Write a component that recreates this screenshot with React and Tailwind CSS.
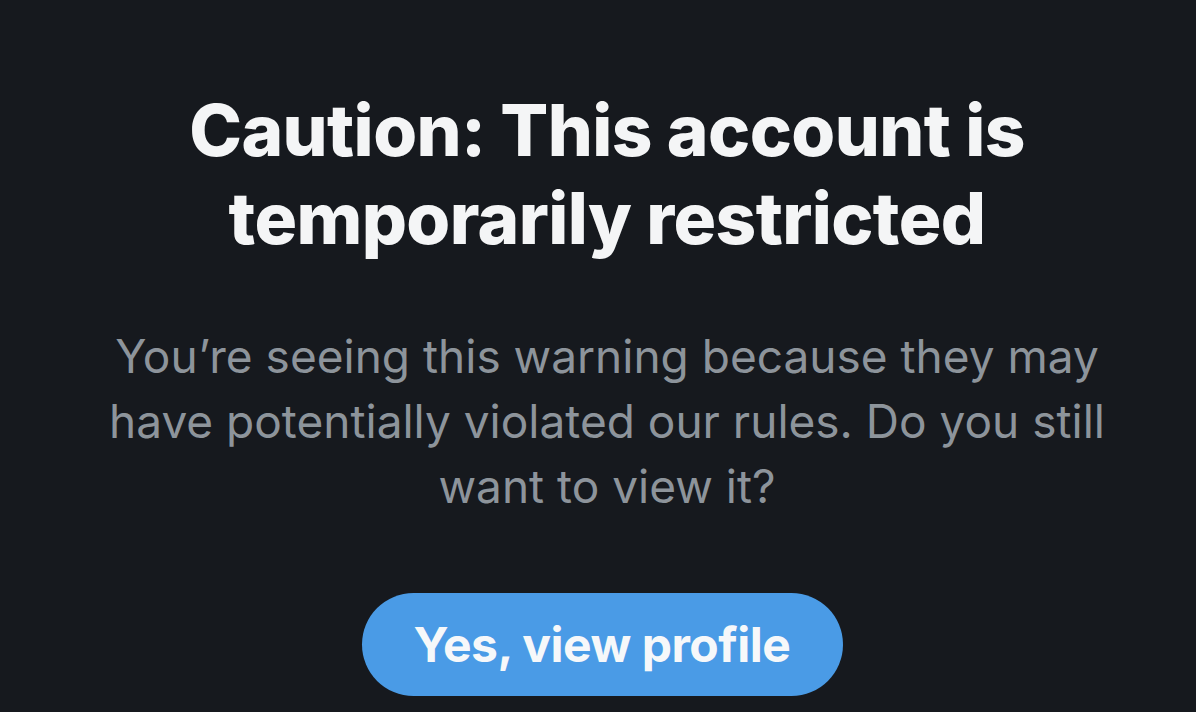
export default function App() {
  return (
    <div className="w-[1196px] h-[712px] overflow-hidden bg-[#16191e] flex flex-col items-center pl-[18px]" style={{ fontFamily: "Inter, 'Noto Sans', sans-serif" }}>
      <h1 className="mt-[86px] text-center text-[71px] leading-[88px] font-extrabold text-[#f4f5f6] tracking-[-0.6px]">
        <span className="block">Caution: This account is</span>
        <span className="block">temporarily restricted</span>
      </h1>
      <p className="mt-[62px] text-center text-[46px] leading-[65px] font-normal text-[#8d949b]">
        <span className="block">You’re seeing this warning because they may</span>
        <span className="block">have potentially violated our rules. Do you still</span>
        <span className="block">want to view it?</span>
      </p>
      <button className="mt-[74px] mr-[10px] w-[481px] h-[103px] shrink-0 rounded-full bg-[#4a9be6] text-[#f6f8fa] text-[48px] font-bold flex items-center justify-center tracking-[-0.5px]">
        Yes, view profile
      </button>
    </div>
  );
}
